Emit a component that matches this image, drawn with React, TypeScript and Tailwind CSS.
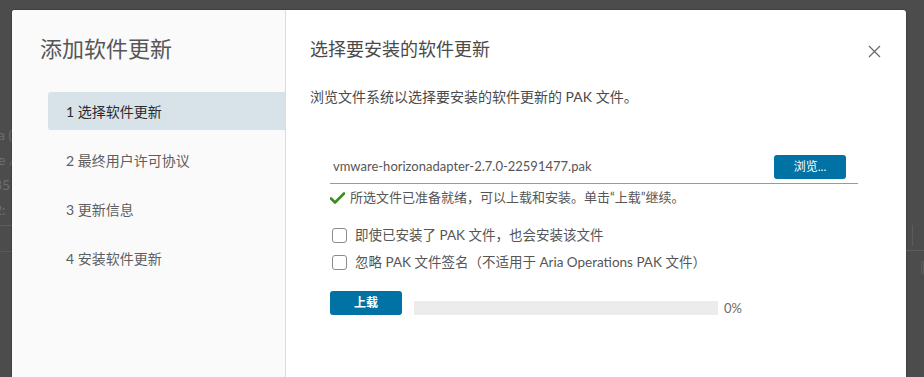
import React from 'react';

const font = { fontFamily: 'Lato, "Noto Sans CJK SC", sans-serif' };

const steps = ['1 选择软件更新', '2 最终用户许可协议', '3 更新信息', '4 安装软件更新'];

const CheckIcon = () => (
  <svg width="15" height="12" viewBox="0 0 15 12" className="shrink-0">
    <path d="M1 6.5 L5 10.5 L14 1.5" fill="none" stroke="#3e8c1e" strokeWidth="2.6" strokeLinecap="round" strokeLinejoin="round" />
  </svg>
);

const CloseIcon = () => (
  <svg width="13" height="13" viewBox="0 0 13 13" className="mt-[4px]">
    <path d="M1 1 L12 12 M12 1 L1 12" stroke="#6a6a6a" strokeWidth="1.3" />
  </svg>
);

const Checkbox: React.FC<{ label: string }> = ({ label }) => (
  <label className="flex items-center gap-[8px] h-[20px]">
    <span className="w-[15px] h-[15px] rounded-[3px] border border-[#8c8c8c] bg-white shrink-0" />
    <span className="text-[13.5px] text-[#565656]">{label}</span>
  </label>
);

const App: React.FC = () => {
  return (
    <div className="w-[924px] h-[377px] bg-[#4c4c4c] overflow-hidden flex" style={font}>
      {/* page behind the dialog */}
      <div className="w-[12px] shrink-0 overflow-hidden pt-[124px] text-[14px] text-[#6e6e6e]">
        <div className="h-[25px] -ml-[2px] whitespace-nowrap">a (</div>
        <div className="h-[25px] -ml-[2px] whitespace-nowrap">e /</div>
        <div className="h-[25px] -ml-[6px] whitespace-nowrap">35</div>
        <div className="h-[20px] -ml-[6px] whitespace-nowrap">2:</div>
        <div className="border-t border-[#5c5c5c] h-[26px] mt-[6px]" />
        <div className="border-t border-[#595959]" />
      </div>

      <div className="mt-[10px] w-[894px] h-[400px] shrink-0 flex bg-white rounded-t-[3px] overflow-hidden shadow-[0_0_2px_rgba(0,0,0,0.4)]">
        <div className="w-[274px] shrink-0 bg-[#fafafa] border-r border-[#dcdcdc] pt-[24px]">
          <h1 className="pl-[28px] text-[22px] leading-[30px] text-[#565656] font-normal">添加软件更新</h1>
          <div className="mt-[28px] pl-[36px] flex flex-col gap-[11px]">
            {steps.map((s, i) => (
              <div
                key={s}
                className={`h-[38px] flex items-center pl-[18px] text-[14px] rounded-l-[3px] ${
                  i === 0 ? 'bg-[#d8e3e9] text-[#2b2b2b]' : 'text-[#5e5e5e]'
                }`}
              >
                {s}
              </div>
            ))}
          </div>
        </div>

        <div className="flex-1 pl-[24px] pr-[25px] pt-[27px]">
          <div className="flex items-center justify-between">
            <h2 className="text-[18px] leading-[24px] text-[#4a4a4a] font-normal">选择要安装的软件更新</h2>
            <CloseIcon />
          </div>
          <p className="mt-[26px] text-[14px] leading-[20px] text-[#4a4a4a]">浏览文件系统以选择要安装的软件更新的 PAK 文件。</p>

          <div className="ml-[20px] mt-[48px] w-[528px]">
            <div className="flex items-center justify-between pl-[3px] pr-[12px] pb-[4px] border-b border-[#9a9a9a]">
              <span className="text-[13px] text-[#565656]">vmware-horizonadapter-2.7.0-22591477.pak</span>
              <button className="w-[72px] h-[24px] rounded-[3px] bg-[#0072a3] text-white text-[12px]">浏览...</button>
            </div>
            <div className="mt-[4px] flex items-center gap-[5px] h-[20px] text-[13px] text-[#565656]">
              <CheckIcon />
              <span>所选文件已准备就绪，可以上载和安装。单击“上载”继续。</span>
            </div>

            <div className="mt-[17px] flex flex-col gap-[7px] pl-[2px]">
              <Checkbox label="即使已安装了 PAK 文件，也会安装该文件" />
              <Checkbox label="忽略 PAK 文件签名（不适用于 Aria Operations PAK 文件）" />
            </div>

            <div className="mt-[19px] flex items-end">
              <button className="w-[72px] h-[24px] rounded-[3px] bg-[#0072a3] text-white text-[12px] font-bold">上载</button>
              <div className="ml-[12px] w-[304px] h-[14px] bg-[#ececec]" />
              <span className="ml-[6px] text-[13px] leading-[14px] text-[#6a6a6a]">0%</span>
            </div>
          </div>
        </div>
      </div>

      <div className="flex-1 relative pt-[225px]">
        <div className="ml-[6px] h-[21px] w-[1px] bg-[#5c5c5c]" />
        <div className="mt-[4px] border-t border-[#5c5c5c]" />
        <div className="mt-[9px] ml-[15px] h-[15px] border border-[#5e5e5e] rounded-[2px]" />
      </div>
    </div>
  );
};

export default App;
